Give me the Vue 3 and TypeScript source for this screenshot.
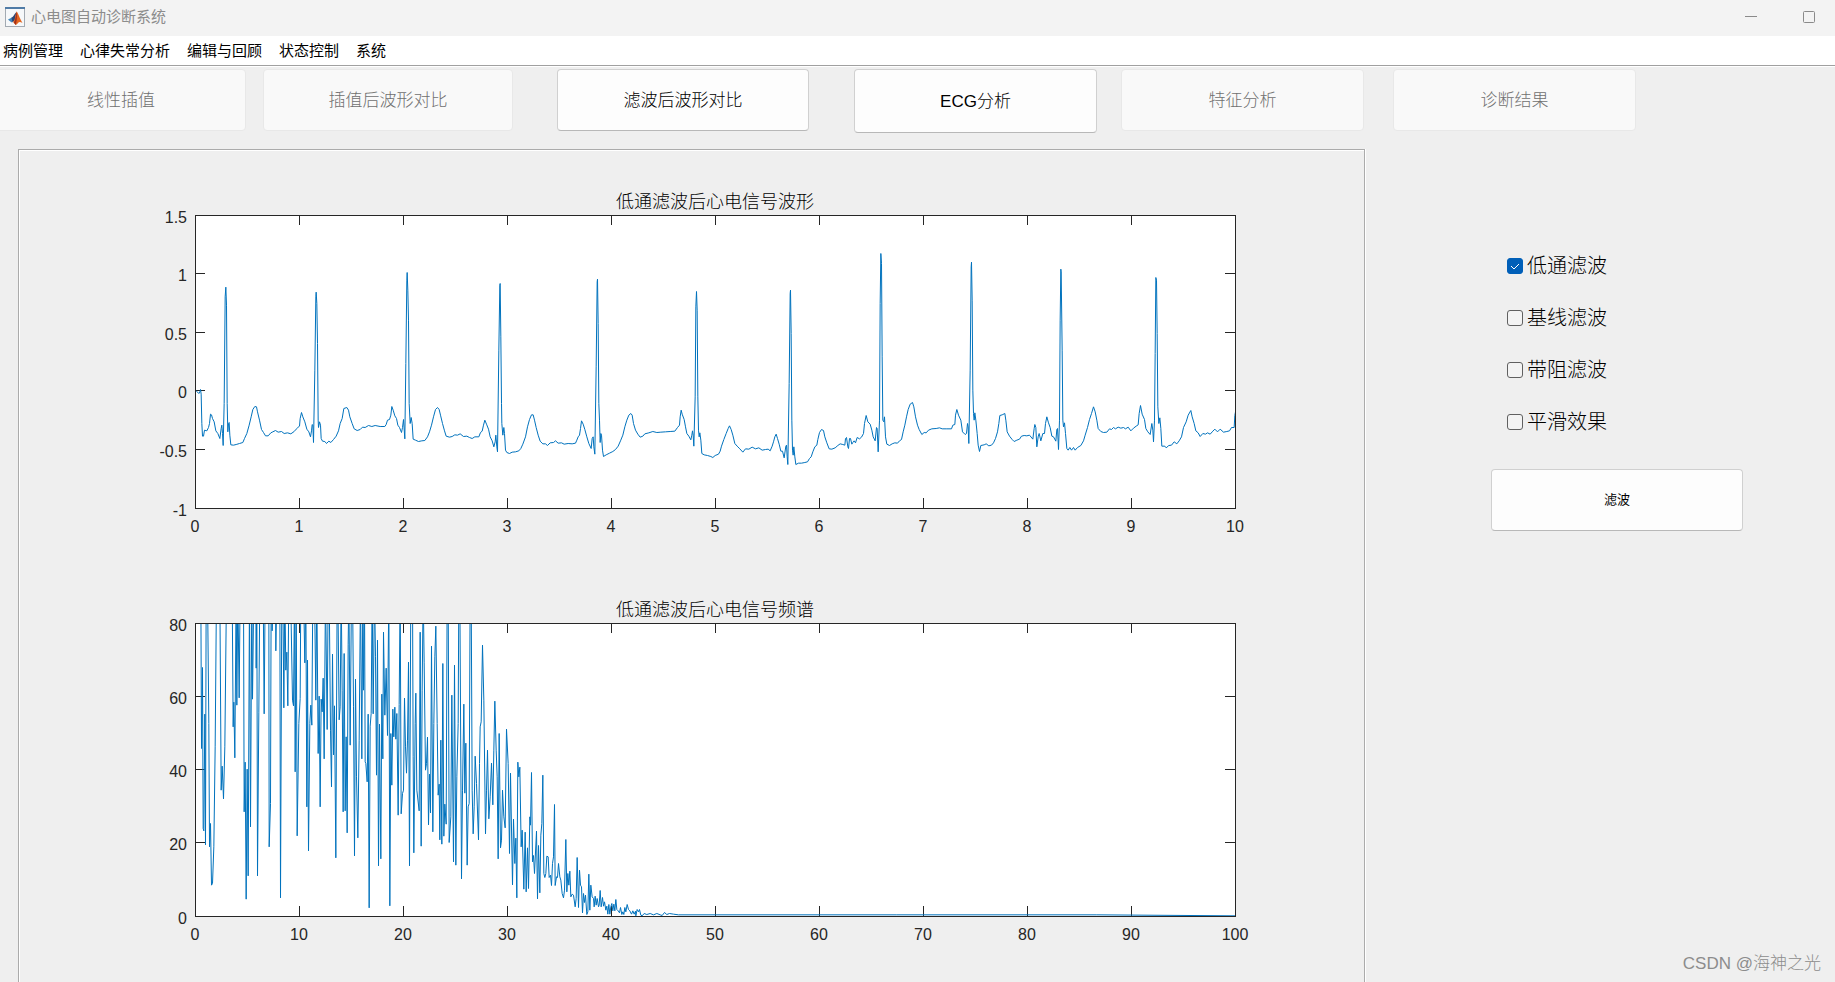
<script setup lang="ts">
import { ref } from 'vue'

interface Trace { offset: number; samples: string }
interface Chart {
  id: string
  title: string
  xLabels: string[]
  yLabels: string[]
  path: string
}

// Samples are stored on a grid three times finer than the plot area.
const GRID = 3
const PLOT = { x: 176, y: 65, width: 1040, height: 293, tick: 10 }

const ecgTraces: Trace[] = [
  {
    offset: 136,
    samples:
      '136,600 141,605 146,610 149,605 151,598 153,612 155,700 157,738 160,738 163,720 170,722 175,712 178,700 181,672 184,674 187,685 192,695 197,722 203,730 209,745 213,715 215,705 217,730 219,766 222,640 225,320 227,291 229,345 231,640 233,725 235,700 237,697 239,735 242,764 250,765 258,763 268,760 278,757 283,745 290,730 297,705 303,680 308,658 314,649 319,650 322,665 328,690 334,718 340,727 346,737 354,737 362,728 368,725 376,721 384,726 394,724 402,730 412,728 422,731 432,724 438,717 443,712 448,708 450,685 454,667 458,680 464,695 470,717 476,725 481,740 484,722 486,703 488,705 490,757 494,540 497,320 498,306 500,340 502,460 504,690 505,712 508,695 511,705 513,745 517,753 524,754 529,760 536,753 542,757 550,748 558,738 565,722 570,700 576,685 581,655 590,652 595,660 599,680 606,700 612,716 621,721 630,718 637,711 645,712 655,706 665,709 675,706 690,709 704,709 708,703 712,690 718,688 722,675 725,649 729,660 734,677 739,685 743,705 748,712 754,727 757,712 760,688 764,746 767,520 770,270 771,247 773,300 775,390 777,640 780,700 783,682 786,700 789,747 796,750 805,754 815,752 824,751 832,740 838,725 844,705 850,680 856,658 862,652 867,658 871,675 877,700 883,722 888,738 898,741 906,739 914,734 922,735 930,731 940,739 950,738 958,742 966,745 974,740 986,740 991,727 996,723 1000,705 1004,690 1009,702 1015,717 1020,740 1026,752 1031,770 1035,755 1037,735 1040,770 1042,785 1046,480 1049,285 1050,280 1052,440 1054,640 1055,700 1058,735 1061,712 1063,730 1066,780 1070,787',
  },
  {
    offset: -914,
    samples:
      '28,790 36,786 46,785 56,782 62,775 68,762 76,740 82,710 88,688 94,674 99,674 103,690 108,712 114,735 120,753 128,761 136,761 142,766 150,758 160,757 166,752 174,759 184,758 192,762 204,760 216,761 226,759 230,750 234,740 238,735 241,715 244,692 249,702 254,718 260,740 266,760 273,775 276,745 279,740 281,770 284,792 288,530 291,275 292,267 294,400 296,640 298,690 300,757 302,730 304,735 307,780 310,799 318,794 328,789 338,784 346,778 354,768 361,752 368,735 374,710 380,690 386,675 392,670 396,675 400,700 406,720 413,732 420,741 428,738 434,731 446,728 458,724 470,727 482,726 496,725 510,724 524,723 532,712 538,705 540,680 543,660 546,672 552,688 556,710 560,730 566,738 572,749 575,735 577,722 579,735 581,768 585,620 587,350 589,304 591,360 593,620 595,720 597,740 599,728 602,750 605,790 612,794 622,796 632,799 638,802 645,796 655,792 660,783 664,768 671,748 678,730 684,715 688,707 693,718 698,735 704,760 711,768 719,776 728,786 736,776 746,777 756,771 766,776 776,773 786,780 796,778 804,777 810,782 816,768 820,755 824,740 828,732 832,745 837,762 842,783 847,783 852,803 857,768 859,765 861,800 863,823 867,580 870,310 871,300 873,430 875,690 877,780 879,795 881,770 884,800 887,823 895,819 904,819 914,817 922,815 928,805 933,800 938,785 944,770 950,765 953,748 958,727 964,718 970,721 974,740 980,758 987,776 995,777 1005,773 1013,766 1020,761 1028,763 1034,765 1036,745 1039,742 1043,770 1045,775 1048,745 1051,745 1055,762 1058,757 1062,752 1066,758 1071,742 1078,746 1084,741 1090,730 1093,700 1098,676 1103,695',
  },
  {
    offset: -2024,
    samples:
      '0,702 5,720 9,740 15,752 19,712 21,715 24,785 28,690 30,340 32,190 34,220 36,500 38,690 41,695 43,680 46,740 50,762 58,766 66,761 74,758 82,759 88,752 94,748 99,725 104,705 109,680 114,658 120,642 127,637 131,650 136,680 142,705 147,718 155,733 162,727 168,728 175,720 185,716 198,715 208,713 216,716 230,716 244,716 248,705 254,703 256,675 260,658 265,675 272,690 277,725 285,733 289,730 292,700 294,710 296,760 300,540 303,230 304,216 306,330 308,600 310,670 312,690 314,668 317,690 321,730 324,765 328,784 332,766 342,764 348,761 356,767 364,765 370,758 376,745 382,725 386,700 389,676 396,674 404,670 407,690 411,725 418,738 426,748 432,754 440,750 448,747 454,738 462,736 470,737 478,735 488,747 492,715 494,703 497,712 500,770 504,740 507,730 512,752 518,730 523,730 526,700 530,680 535,698 540,712 545,738 550,740 557,753 560,718 562,715 565,778 568,690 570,390 572,237 573,245 576,480 578,690 580,710 583,698 586,730 590,775 594,780 599,772 604,780 610,772 615,780 622,772 632,766 640,752 645,735 652,712 658,688 664,670 670,650 675,665 680,690 684,715 692,724 700,727 710,726 718,716 724,718 730,712 736,716 744,711 752,714 760,712 766,716 774,711 782,722 790,714 798,708 804,704 807,670 811,646 816,672 823,688 827,715 833,725 840,733 845,700 848,720 850,755 853,690 855,490 857,262 859,270 861,430 863,650 866,700 869,683 872,715 875,768 884,768 888,773 896,766 904,765 912,755 920,761 927,752 934,740 940,712 948,695 954,675 962,661 966,680 972,700 977,722 984,728 990,739 998,730 1006,732 1012,728 1020,732 1028,723 1034,717 1042,725 1050,717 1060,726 1070,724 1078,722 1084,712 1092,712 1094,676 1096,665',
  },
]

const spectrumTraces: Trace[] = [
  {
    offset: 136,
    samples:
      '148,0 152,0 154,475 157,232 159,715 161,722 164,372 166,764 168,0 172,0 176,400 178,770 181,700 184,885 187,880 191,770 195,470 199,0 209,0 213,600 216,528 220,626 224,470 229,0 246,0 249,410 251,336 254,503 258,0 260,345 263,0 267,323 270,0 280,0 282,665 285,516 288,927 291,537 294,857 298,0 301,710 305,0 307,327 311,0 317,0 318,234 320,0 322,857 326,366 329,0 339,0 342,371 345,0 356,0 357,770 361,640 363,0 366,122 370,0 376,0 377,182 380,0 389,0 391,923 395,0 398,0 401,353 404,0 407,240 410,186 413,347 416,0 419,0 423,100 427,330 430,347 433,0 435,545 438,0 441,737 446,400 450,325 452,0 460,0 464,218 467,0 470,650 472,210 475,782 479,400 482,345 485,405 488,0 493,0 497,330 500,0 504,490 507,318 510,650 513,327 516,365 519,264 522,506 526,0 531,418 534,0 537,0 541,420 544,590 547,192 550,494 553,347 557,803 561,0 564,100 567,389 570,350 573,0 576,300 579,665 582,190 585,662 588,440 591,728',
  },
  {
    offset: -434,
    samples:
      '24,162 26,0 30,465 34,0 38,100 40,350 43,797 46,267 49,560 53,743 57,450 61,0 65,506 68,0 70,300 73,0 75,515 77,520 81,575 84,372 87,953 90,408 93,370 96,0 99,371 103,0 106,200 109,555 112,150 115,827 118,402 122,806 125,312 128,506 130,126 134,375 138,234 142,436 146,0 149,947 152,430 155,585 158,357 161,440 164,351 167,447 170,370 174,675 177,343 180,0 183,671 187,610 190,600 193,324 196,470 199,549 202,450 205,216 208,827 212,0 217,0 219,500 221,788 225,400 227,309 230,600 237,662 240,126 243,768 246,300 249,0 252,218 256,540 259,520 262,441 265,704 268,552 271,668 274,168 278,725 281,400 284,200 287,108 291,400 294,615 297,582 299,749 302,450 305,762 308,220 311,738 314,642 318,702 321,0 324,0 327,757 332,680 335,315 340,815 343,225 347,825 350,560 354,400 356,0 359,0 364,866 367,600 371,342 374,609 377,459 381,825 384,650 387,640 390,0 393,0 396,600 399,731 402,650 405,498 409,580 415,749 418,520 420,410 423,395 427,165 431,330 436,731 439,600 442,480 446,686 450,620 454,519 458,644 461,480 464,333 468,480 471,560 474,806 477,430 481,773 484,750 487,600 491,680 495,713 499,417 504,520 508,790 511,549 517,884 520,687 524,820 527,744 530,923 533,516 536,560 539,531 543,770 546,720 551,897 555,726 558,905 562,773 565,895 569,680 571,705',
  },
  {
    offset: -1004,
    samples:
      '4,547 7,815 10,796 13,850 19,723 22,926 25,766 29,908 32,735 35,700 38,555 41,850 44,862 47,850 50,798 54,800 57,862 61,855 64,886 67,820 70,800 73,643 75,886 79,860 82,862 85,820 89,860 92,870 96,910 100,923 103,900 107,748 110,905 113,850 116,885 119,843 122,920 126,912 130,915 135,950 138,925 141,802 145,952 148,840 151,885 154,890 157,968 160,910 163,937 166,915 170,973 173,965 176,852 179,960 182,885 186,920 190,925 192,950 195,918 198,945 201,925 205,950 207,945 210,901 213,950 217,922 220,948 223,935 227,960 230,948 233,972 236,943 239,972 242,950 245,940 248,962 251,942 254,962 257,928 260,958 264,962 268,968 271,952 275,973 278,965 281,973 284,952 287,965 291,943 295,958 299,962 304,972 308,962 312,972 316,963 317,977 321,958 325,965 328,958 332,975 336,977 342,970 350,973 360,970 370,974 380,970 390,974 396,976 403,967 410,973 418,970 430,972 445,974 1100,974 1700,974 2116,977',
  },
]

function toPath(traces: Trace[], top: number): string {
  const points = traces.flatMap(({ offset, samples }) =>
    samples.split(' ').map((pair) => {
      const [x, y] = pair.split(',').map(Number)
      const px = PLOT.x + 0.5 + (x - offset) / GRID
      const py = PLOT.y + 0.5 + (y - top) / GRID
      return `${px.toFixed(2)} ${py.toFixed(2)}`
    }),
  )
  return `M${points.join('L')}`
}

const charts: Chart[] = [
  {
    id: 'waveform',
    title: '低通滤波后心电信号波形',
    xLabels: ['0', '1', '2', '3', '4', '5', '6', '7', '8', '9', '10'],
    yLabels: ['1.5', '1', '0.5', '0', '-0.5', '-1'],
    path: toPath(ecgTraces, 76),
  },
  {
    id: 'spectrum',
    title: '低通滤波后心电信号频谱',
    xLabels: ['0', '10', '20', '30', '40', '50', '60', '70', '80', '90', '100'],
    yLabels: ['80', '60', '40', '20', '0'],
    path: toPath(spectrumTraces, 100),
  },
]

const xAt = (i: number, labels: string[]) => PLOT.x + (PLOT.width * i) / (labels.length - 1)
const yAt = (i: number, labels: string[]) =>
  PLOT.y + Math.floor((PLOT.height * i) / (labels.length - 1))

function tickPath(chart: Chart): string {
  const right = PLOT.x + PLOT.width
  const bottom = PLOT.y + PLOT.height
  const vertical = chart.xLabels.slice(1, -1).map((_, i) => {
    const x = xAt(i + 1, chart.xLabels) + 0.5
    return `M${x} ${PLOT.y}v${PLOT.tick}M${x} ${bottom}v${-PLOT.tick}`
  })
  const horizontal = chart.yLabels.slice(1, -1).map((_, i) => {
    const y = yAt(i + 1, chart.yLabels) + 0.5
    return `M${PLOT.x} ${y}h${PLOT.tick}M${right} ${y}h${-PLOT.tick}`
  })
  return [...vertical, ...horizontal].join('')
}

const menus = ['病例管理', '心律失常分析', '编辑与回顾', '状态控制', '系统']

const steps = [
  { label: '线性插值', enabled: false },
  { label: '插值后波形对比', enabled: false },
  { label: '滤波后波形对比', enabled: true },
  { label: 'ECG分析', enabled: true },
  { label: '特征分析', enabled: false },
  { label: '诊断结果', enabled: false },
]

const filters = ref([
  { id: 'lowpass', label: '低通滤波', checked: true },
  { id: 'baseline', label: '基线滤波', checked: false },
  { id: 'bandstop', label: '带阻滤波', checked: false },
  { id: 'smooth', label: '平滑效果', checked: false },
])
</script>

<template>
  <div class="window">
    <header class="titlebar">
      <svg class="app-icon" viewBox="0 0 20 20" aria-hidden="true">
        <rect x="0.5" y="0.5" width="19" height="19" fill="#f6f8fa" stroke="#a3aab2" />
        <rect x="0" y="0" width="20" height="2" fill="#4f7ba6" />
        <path d="M3 12.500l4-2 2.500 2-3 3z" fill="#3f86bd" />
        <path d="M6.500 10.500c2-.5 3-4 5-5.500L10 13l-2.500 2.500z" fill="#2d4674" />
        <path d="M11.500 4.500c1.500 1 3 6.500 6 11.500-2-1.500-3.500-1.500-4.500 0-.8 1.200-1.500 1.800-2.300 2L8 15c2-1 2.500-8 3.500-10.500z" fill="#e4651f" />
        <path d="M11.500 4.500c.8 3 .8 8-.8 13.500L9 15.800c1.500-3 2-8 2.500-11.300z" fill="#a3301c" />
      </svg>
      <h1 class="title">心电图自动诊断系统</h1>
      <div class="window-controls">
        <button class="window-button" type="button" aria-label="最小化">
          <svg viewBox="0 0 12 12" aria-hidden="true"><path d="M0 5.500h12" /></svg>
        </button>
        <button class="window-button" type="button" aria-label="最大化">
          <svg viewBox="0 0 12 12" aria-hidden="true">
            <rect x="0.5" y="0.5" width="11" height="11" rx="1" />
          </svg>
        </button>
      </div>
    </header>

    <nav class="menubar">
      <button v-for="menu in menus" :key="menu" class="menu" type="button">{{ menu }}</button>
    </nav>

    <div class="toolbar">
      <button
        v-for="step in steps"
        :key="step.label"
        class="push-button step"
        type="button"
        :disabled="!step.enabled"
      >
        {{ step.label }}
      </button>
    </div>

    <main class="workspace">
      <section class="panel">
        <svg
          v-for="chart in charts"
          :key="chart.id"
          class="chart"
          viewBox="0 0 1345 408"
          role="img"
          :aria-label="chart.title"
        >
          <defs>
            <clipPath :id="`clip-${chart.id}`">
              <rect :x="PLOT.x" :y="PLOT.y" :width="PLOT.width + 1" :height="PLOT.height + 1" />
            </clipPath>
          </defs>
          <text class="chart-title" :x="PLOT.x + PLOT.width / 2" y="58">{{ chart.title }}</text>
          <rect class="plot" :x="PLOT.x" :y="PLOT.y" :width="PLOT.width" :height="PLOT.height" />
          <path class="axes" :d="tickPath(chart)" />
          <path class="trace" :d="chart.path" :clip-path="`url(#clip-${chart.id})`" />
          <rect
            class="axes"
            :x="PLOT.x + 0.5"
            :y="PLOT.y + 0.5"
            :width="PLOT.width"
            :height="PLOT.height"
          />
          <text
            v-for="(label, i) in chart.xLabels"
            :key="`x${label}`"
            class="x-label"
            :x="xAt(i, chart.xLabels)"
            :y="PLOT.y + PLOT.height + 24"
          >{{ label }}</text>
          <text
            v-for="(label, i) in chart.yLabels"
            :key="`y${label}`"
            class="y-label"
            :x="PLOT.x - 8"
            :y="yAt(i, chart.yLabels) + 8"
          >{{ label }}</text>
        </svg>
      </section>

      <aside class="filters">
        <label v-for="filter in filters" :key="filter.id" class="filter">
          <input v-model="filter.checked" class="filter-box" type="checkbox" />
          <svg class="filter-mark" viewBox="0 0 16 16" aria-hidden="true">
            <path d="M4 8l3 3 5-5" />
          </svg>
          <span>{{ filter.label }}</span>
        </label>
        <button class="push-button apply" type="button">滤波</button>
      </aside>
    </main>

    <div class="watermark">CSDN @海神之光</div>
  </div>
</template>

<style>
body {
  margin: 0;
  background: #efefef;
}
</style>

<style scoped>
.window {
  position: relative;
  display: flex;
  flex-direction: column;
  min-height: 100vh;
  background: #efefef;
  font-family: 'Liberation Sans', 'Noto Sans CJK SC', sans-serif;
  color: #000;
}

button {
  padding: 0;
  font-family: inherit;
  color: inherit;
}

.titlebar {
  display: flex;
  align-items: center;
  height: 36px;
  padding: 0 14px 2px 5px;
  box-sizing: border-box;
  background: #f3f3f3;
}

.app-icon {
  width: 20px;
  height: 20px;
  margin-right: 6px;
}

.title {
  margin: 0;
  font-size: 15px;
  line-height: 20px;
  font-weight: 400;
  color: #8c8c8c;
}

.window-controls {
  display: flex;
  gap: 34px;
  margin-left: auto;
}

.window-button {
  display: flex;
  align-items: center;
  justify-content: center;
  width: 24px;
  height: 24px;
  border: 0;
  background: none;
}

.window-button svg {
  width: 12px;
  height: 12px;
  fill: none;
  stroke: #8a8a8a;
}

.menubar {
  display: flex;
  align-items: center;
  gap: 17px;
  height: 29px;
  padding-left: 3px;
  border-bottom: 1px solid #a0a0a0;
  background: #fff;
  box-shadow: 0 1px #fff;
}

.menu {
  border: 0;
  background: none;
  font-size: 15px;
  line-height: 20px;
}

.toolbar {
  display: grid;
  grid-template-columns: 246fr 17fr 250fr 44fr 252fr 45fr 243fr 24fr 243fr 29fr 243fr 199fr;
  align-items: start;
  padding-top: 3px;
}

.push-button {
  box-sizing: border-box;
  height: 62px;
  border: 1px solid #d0d0d0;
  border-bottom-color: #b8b8b8;
  border-radius: 4px;
  background: #fdfdfd;
}

.push-button:disabled {
  border-color: #e8e8e8;
  background: #f9f9f9;
  color: #707070;
}

.step {
  padding-top: 1px;
  font-size: 17px;
  line-height: 24px;
  font-weight: 300;
}

.step:nth-child(1) { grid-column: 1; margin-left: -4px; }
.step:nth-child(2) { grid-column: 3; }
.step:nth-child(3) { grid-column: 5; }
.step:nth-child(4) { grid-column: 7; height: 64px; }
.step:nth-child(5) { grid-column: 9; }
.step:nth-child(6) { grid-column: 11; }

.workspace {
  flex: 1;
  display: grid;
  grid-template-columns: minmax(0, 1fr) 470px;
  margin-top: 16px;
  padding-left: 18px;
}

.panel {
  border: 1px solid #ababab;
  border-bottom: 0;
  box-shadow: inset 1px 1px #fff, 1px 0 #fff;
}

.chart {
  display: block;
  width: 100%;
  height: auto;
}

.chart text {
  font-size: 16px;
  fill: #262626;
}

.chart .chart-title {
  font-size: 18px;
  font-weight: 300;
  fill: #000;
  text-anchor: middle;
}

.x-label {
  text-anchor: middle;
}

.y-label {
  text-anchor: end;
}

.plot {
  fill: #fff;
}

.axes {
  fill: none;
  stroke: #262626;
  stroke-width: 1;
}

.trace {
  fill: none;
  stroke: #0072bd;
  stroke-width: 1;
  stroke-linejoin: round;
}

.filters {
  display: flex;
  flex-direction: column;
  align-items: flex-start;
  gap: 28px;
  padding: 105px 0 0 126px;
}

.filter {
  position: relative;
  display: flex;
  align-items: center;
  gap: 4px;
  margin-left: 16px;
  font-size: 20px;
  line-height: 24px;
  font-weight: 300;
}

.filter-box {
  appearance: none;
  width: 16px;
  height: 16px;
  margin: 0;
  box-sizing: border-box;
  border: 1px solid #606060;
  border-radius: 3px;
  background: #f3f3f3;
}

.filter-box:checked {
  border-color: #005fb8;
  background: #005fb8;
}

.filter-mark {
  position: absolute;
  left: 0;
  width: 16px;
  height: 16px;
  fill: none;
  stroke: #fff;
  visibility: hidden;
  pointer-events: none;
}

.filter-box:checked + .filter-mark {
  visibility: visible;
}

.apply {
  width: 252px;
  margin-top: 7px;
  font-size: 13px;
  line-height: 20px;
}

.watermark {
  position: absolute;
  right: 14px;
  bottom: 6px;
  font-size: 17px;
  line-height: 24px;
  font-weight: 300;
  color: #8c8c8c;
}
</style>
